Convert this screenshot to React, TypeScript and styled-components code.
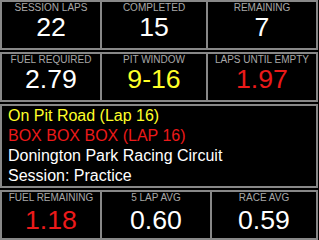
import React from "react";
import styled, { createGlobalStyle } from "styled-components";

const COLORS = {
  frame: "#888888",
  label: "#a8a8a8",
  white: "#ffffff",
  yellow: "#ffff28",
  red: "#ec1a1a",
};

type Stat = { label: string; value: string; color?: string };

const TOP_STATS: Stat[] = [
  { label: "Session Laps", value: "22" },
  { label: "Completed", value: "15" },
  { label: "Remaining", value: "7" },
];

const FUEL_STATS: Stat[] = [
  { label: "Fuel Required", value: "2.79" },
  { label: "Pit Window", value: "9-16", color: COLORS.yellow },
  { label: "Laps Until Empty", value: "1.97", color: COLORS.red },
];

const AVG_STATS: Stat[] = [
  { label: "Fuel Remaining", value: "1.18", color: COLORS.red },
  { label: "5 Lap Avg", value: "0.60" },
  { label: "Race Avg", value: "0.59" },
];

const INFO_LINES = [
  { text: "On Pit Road (Lap 16)", color: COLORS.yellow },
  { text: "BOX BOX BOX (LAP 16)", color: COLORS.red },
  { text: "Donington Park Racing Circuit", color: COLORS.white },
  { text: "Session: Practice", color: COLORS.white },
];

const GlobalStyle = createGlobalStyle`
  html, body {
    margin: 0;
    padding: 0;
    background: #000;
  }
  body {
    font-family: "Liberation Sans", Arial, sans-serif;
  }
`;

const Dash = styled.div`
  display: flex;
  flex-direction: column;
  gap: 2px;
  width: 318px;
  background: #000;
`;

const StatRow = styled.div<{ $cols: string }>`
  display: grid;
  grid-template-columns: ${(p) => p.$cols};
  gap: 2px;
  padding: 2px;
  background: ${COLORS.frame};
`;

const Cell = styled.div`
  display: flex;
  flex-direction: column;
  align-items: center;
  height: 46px;
  background: #000;
`;

const Label = styled.span`
  font-size: 10px;
  line-height: 12px;
  color: ${COLORS.label};
  text-transform: uppercase;
  white-space: nowrap;
`;

const Value = styled.span<{ $color?: string; $drop: number }>`
  margin-top: ${(p) => p.$drop}px;
  font-size: 26.67px;
  line-height: 26px;
  color: ${(p) => p.$color || COLORS.white};
`;

const InfoBox = styled.div`
  height: 80px;
  padding: 0 6px;
  border: 2px solid ${COLORS.frame};
  background: #000;
`;

const InfoLine = styled.div<{ $color: string }>`
  font-size: 16px;
  line-height: 20px;
  color: ${(p) => p.$color};
  white-space: nowrap;
`;

const Stats = ({ items, cols, drop = 0 }: { items: Stat[]; cols: string; drop?: number }) => (
  <StatRow $cols={cols}>
    {items.map((s) => (
      <Cell key={s.label}>
        <Label>{s.label}</Label>
        <Value $color={s.color} $drop={drop}>
          {s.value}
        </Value>
      </Cell>
    ))}
  </StatRow>
);

export default function App() {
  return (
    <>
      <GlobalStyle />
      <Dash>
        <Stats items={TOP_STATS} cols="98px 104px 108px" />
        <Stats items={FUEL_STATS} cols="98px 104px 108px" />
        <InfoBox>
          {INFO_LINES.map((l) => (
            <InfoLine key={l.text} $color={l.color}>
              {l.text}
            </InfoLine>
          ))}
        </InfoBox>
        <Stats items={AVG_STATS} cols="98px 108px 104px" drop={3} />
      </Dash>
    </>
  );
}
